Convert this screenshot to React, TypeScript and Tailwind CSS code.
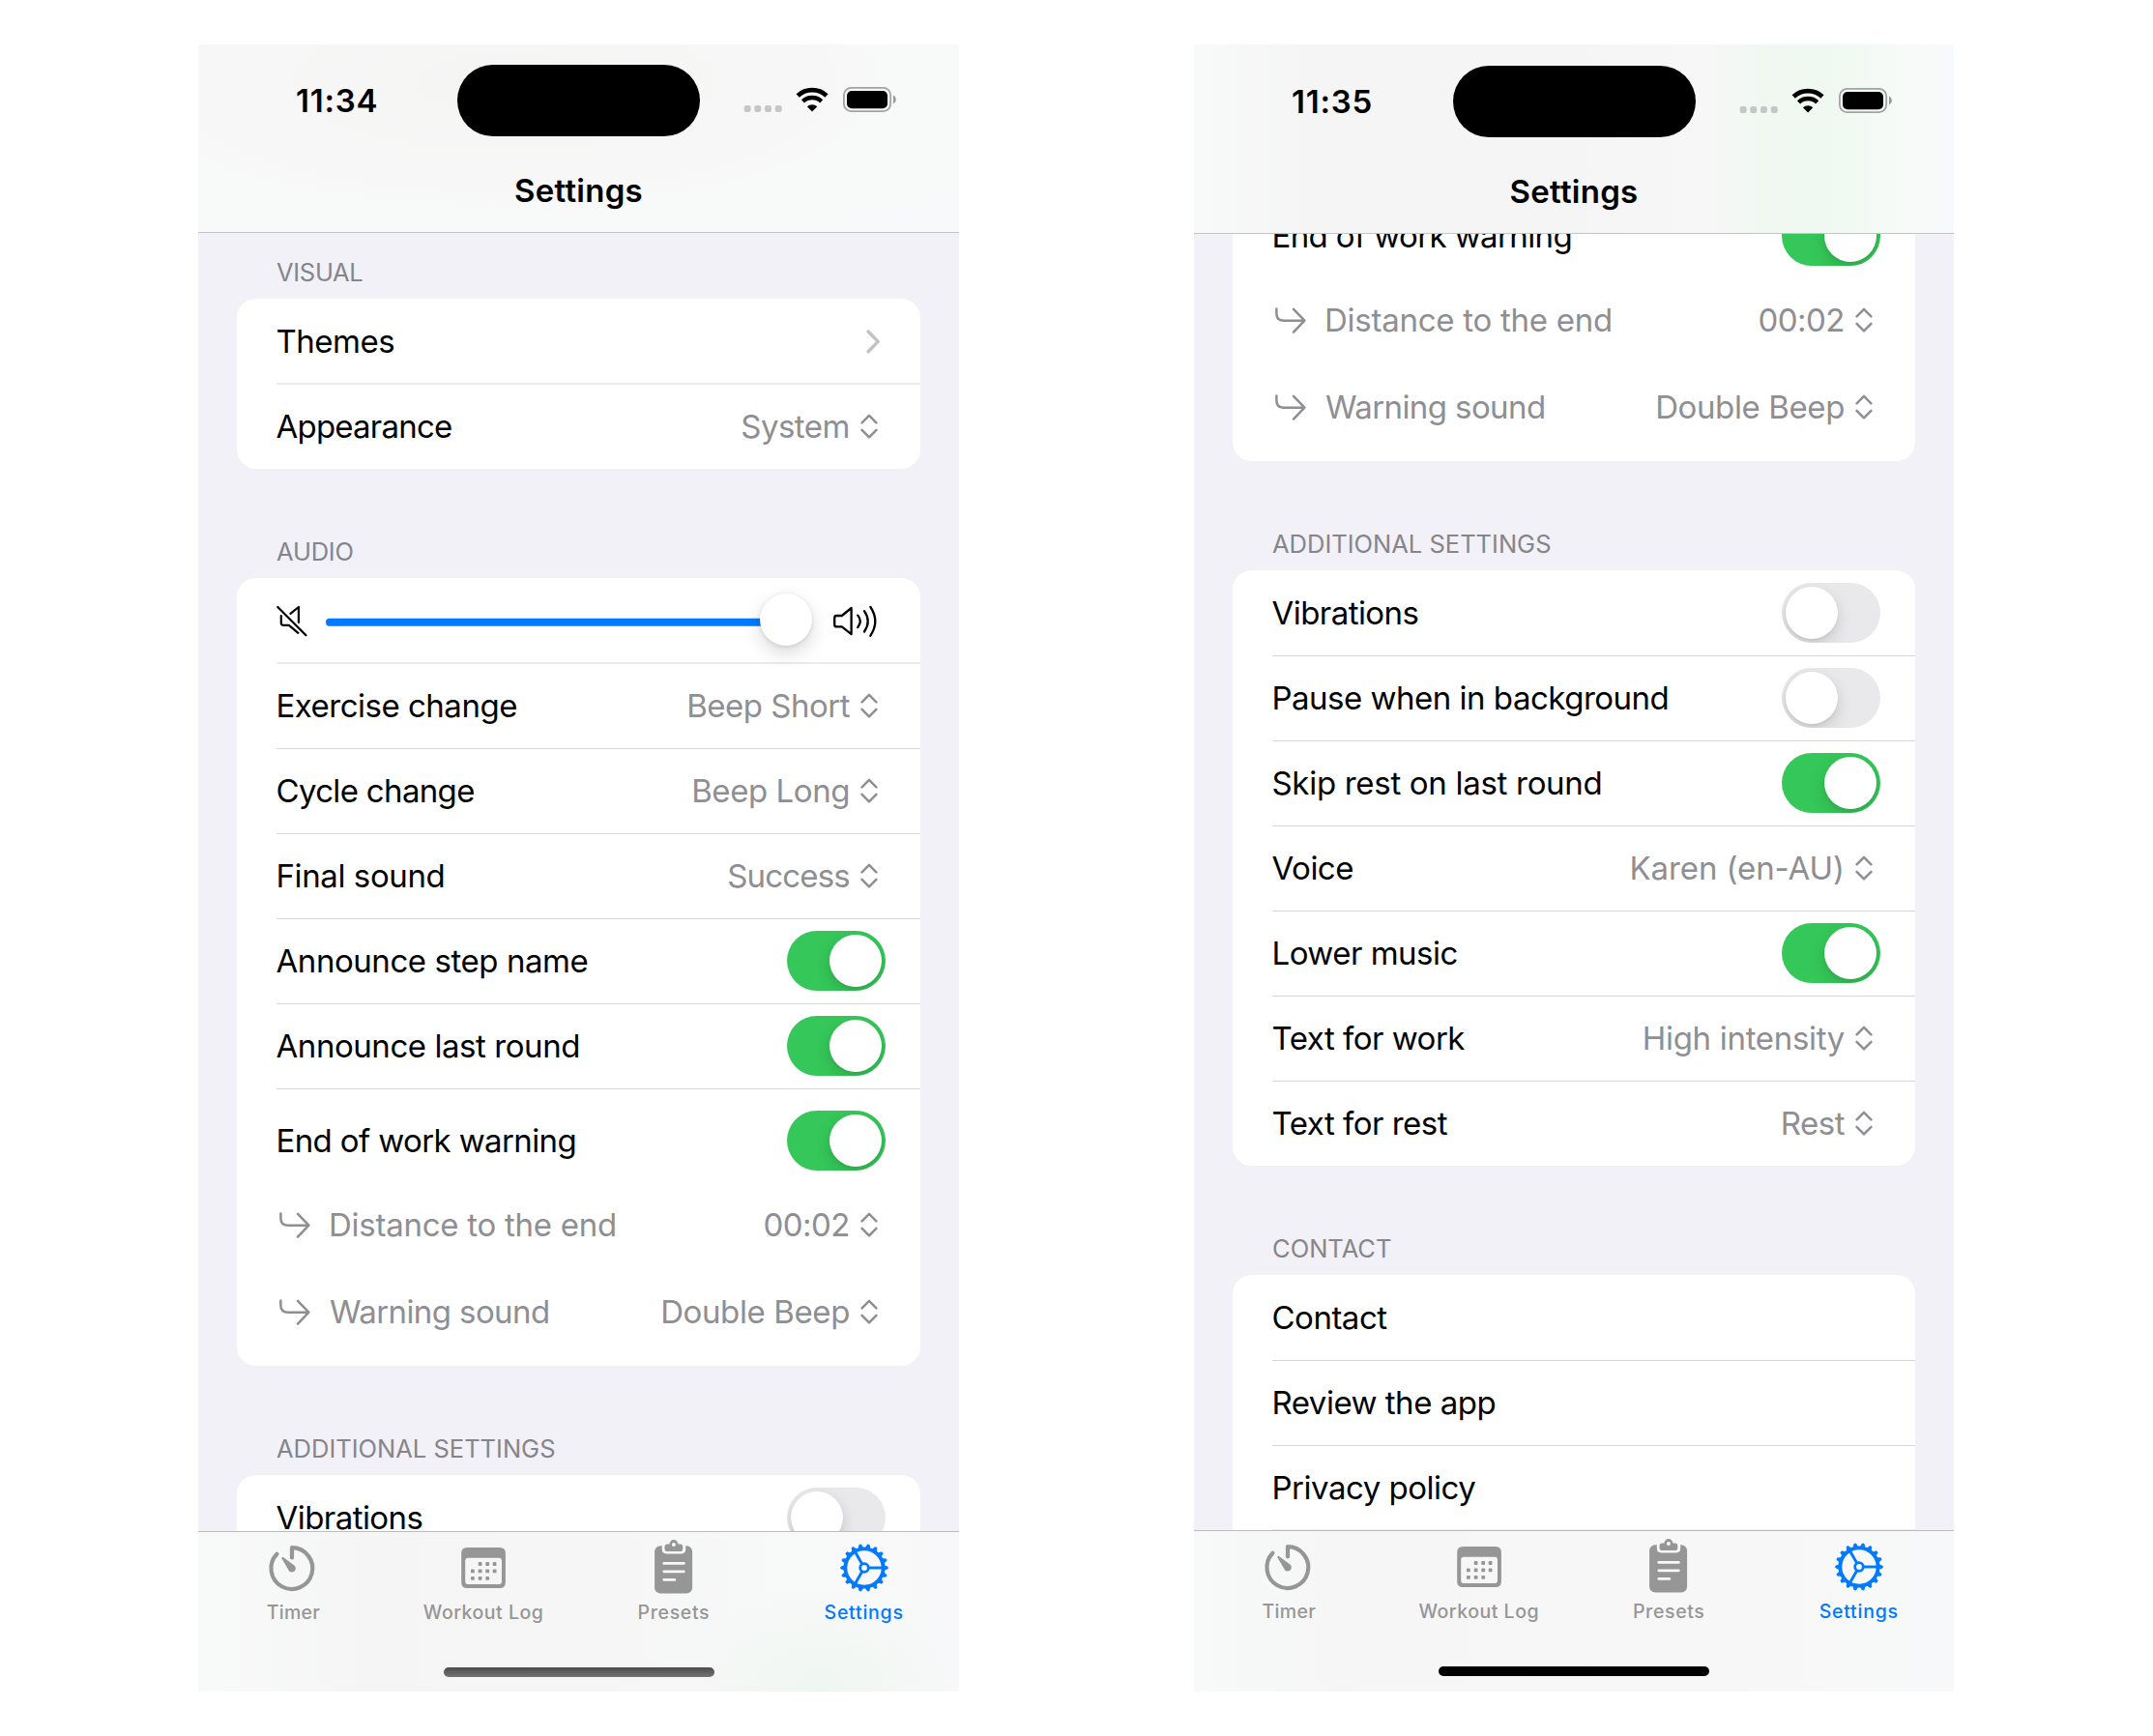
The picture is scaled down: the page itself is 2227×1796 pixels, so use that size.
import React from 'react';

type Accessory =
  | { kind: 'none' }
  | { kind: 'chevron' }
  | { kind: 'select'; value: string; tracking?: string }
  | { kind: 'switch'; on: boolean };

type RowData = {
  label: string;
  tracking?: string;
  accessory: Accessory;
  line?: 'none' | 'crisp' | 'soft';
};

const none: Accessory = { kind: 'none' };
const sw = (on: boolean): Accessory => ({ kind: 'switch', on });
const select = (value: string, tracking?: string): Accessory => ({ kind: 'select', value, tracking });

/* ---------- icons ---------- */

function StatusIcons() {
  return (
    <svg className="h-[30px] w-[160px] shrink-0" viewBox="0 0 160 30" fill="none">
      {[1.7, 12.3, 23, 33.8].map((x) => (
        <rect key={x} x={x} y="20" width="6.9" height="6.9" rx="2.2" fill="#c6c6c8" />
      ))}
      <path d="M57.2 9.9A22 22 0 0 1 87 9.9" stroke="#000" strokeWidth="4.8" />
      <path d="M62.5 15.8A14 14 0 0 1 81.7 15.8" stroke="#000" strokeWidth="4.6" />
      <path d="M72.1 26.6L66.9 21.2A7.6 7.6 0 0 1 77.3 21.2Z" fill="#000" />
      <rect x="104.9" y="1.9" width="48.3" height="24.2" rx="7.6" stroke="#a2a2a4" strokeWidth="1.8" />
      <rect x="108" y="5" width="42" height="18.2" rx="5" fill="#000" />
      <path d="M156 9.6C157.8 10.6 158.8 12.2 158.8 14S157.8 17.4 156 18.4Z" fill="#98989a" />
    </svg>
  );
}

function UpDown() {
  return (
    <svg className="h-[26px] w-[18px] shrink-0" viewBox="0 0 18 26" fill="none" stroke="#8e8e93" strokeWidth="2.5" strokeLinecap="round" strokeLinejoin="round">
      <path d="M1.6 9.3L9 1.9L16.4 9.3M1.6 16.9L9 24.3L16.4 16.9" />
    </svg>
  );
}

function Chevron() {
  return (
    <svg className="h-[26px] w-[16px] shrink-0" viewBox="0 0 16 26" fill="none" stroke="#c2c2c4" strokeWidth="3.4" strokeLinecap="round" strokeLinejoin="round">
      <path d="M3.1 3L13.2 13.4L3.1 23.8" />
    </svg>
  );
}

function NestedArrow() {
  return (
    <svg className="h-[32px] w-[36px] shrink-0" viewBox="0 0 36 32" fill="none" stroke="#8e8e93" strokeWidth="2.5" strokeLinecap="round" strokeLinejoin="round">
      <path d="M4.4 4.4V9.6Q4.4 16.7 11.5 16.7H33.2M22 4.8L33.4 16.7L22 28.6" />
    </svg>
  );
}

function Mute() {
  return (
    <svg className="-ml-px h-[36px] w-[34px] shrink-0" viewBox="0 0 34 36" fill="none" stroke="#000" strokeWidth="2.2" strokeLinecap="round" strokeLinejoin="round">
      <path d="M2.3 4L31.5 33.2M5.8 13V20.6Q5.8 22.8 8 22.8H13.9L23.4 30.8M15.4 10.8L23.9 4V20" />
    </svg>
  );
}

function Loud() {
  return (
    <svg className="h-[36px] w-[50px] shrink-0" viewBox="0 0 50 36" fill="none" stroke="#000" strokeWidth="2.3" strokeLinecap="round" strokeLinejoin="round">
      <path d="M3.2 15.2Q3.2 13 5.4 13H10.8L20.6 5V32.2L10.8 24.4H5.4Q3.2 24.4 3.2 22.2Z" />
      <path d="M27.3 12.6Q32.3 18.8 27.3 25M34 8.2Q41.4 18.8 34 29.5M40.4 4Q50.2 18.8 40.4 33.7" />
    </svg>
  );
}

function TimerIcon() {
  return (
    <svg className="h-[60px] w-[64px]" viewBox="0 0 64 60" fill="none">
      <path d="M31 19.4V9.2A21.4 21.4 0 1 1 15.4 15.8" stroke="#969696" strokeWidth="4.2" strokeLinecap="round" strokeLinejoin="round" />
      <path d="M20.4 20.3Q20 18.4 21.9 18.9L33.4 27.6A3.9 3.9 0 1 1 28 33.2Z" fill="#969696" />
    </svg>
  );
}

function CalendarIcon() {
  const dots = [
    [28.6, 26], [36.2, 26], [43.6, 26],
    [20.9, 33.4], [28.6, 33.4], [36.2, 33.4], [43.6, 33.4],
    [20.9, 40.8], [28.6, 40.8], [36.2, 40.8],
  ];
  return (
    <svg className="h-[60px] w-[64px]" viewBox="0 0 64 60" fill="#969696">
      <path
        fillRule="evenodd"
        d="M15.2 9H48.9Q54.9 9 54.9 15V45Q54.9 51 48.9 51H15.2Q9.2 51 9.2 45V15Q9.2 9 15.2 9ZM16.2 19.8Q13.2 19.8 13.2 22.8V44Q13.2 47.1 16.2 47.1H48Q51 47.1 51 44V22.8Q51 19.8 48 19.8Z"
      />
      {dots.map(([x, y]) => (
        <rect key={`${x}-${y}`} x={x - 1.9} y={y - 1.9} width="3.8" height="3.8" rx="0.9" />
      ))}
    </svg>
  );
}

function ClipboardIcon() {
  return (
    <svg className="h-[60px] w-[64px]" viewBox="0 0 64 60" fill="none">
      <rect x="12.1" y="7.2" width="39" height="49.2" rx="6" fill="#969696" />
      <path d="M19.8 6H44.2V11Q44.2 15.4 39.8 15.4H24.2Q19.8 15.4 19.8 11Z" fill="#f7f8f8" />
      <path d="M27.4 5.6A4.5 4.5 0 0 1 36.4 5.6H38.6Q41.3 5.6 41.3 8.3V10.2Q41.3 13 38.5 13H25.3Q22.5 13 22.5 10.2V8.3Q22.5 5.6 25.2 5.6Z" fill="#969696" />
      <circle cx="31.9" cy="6" r="2" fill="#f7f8f8" />
      <path d="M21.8 25.4H42.4M21.8 33.8H42.4M21.8 42.4H32.8" stroke="#f7f8f8" strokeWidth="2.8" strokeLinecap="round" />
    </svg>
  );
}

function GearIcon() {
  return (
    <svg className="h-[60px] w-[64px]" viewBox="0 0 64 60" fill="none">
      <g transform="translate(32 30)" stroke="#007aff">
        <circle r="19.6" strokeWidth="3.8" />
        <circle r="4.3" strokeWidth="2.8" />
        {[0, 120, 240].map((a) => (
          <path key={a} d="M5 0H19" strokeWidth="2.9" transform={`rotate(${a})`} />
        ))}
        {Array.from({ length: 18 }, (_, i) => (
          <path key={i} d="M20.5 -2.3L24.2 -0.9V0.9L20.5 2.3Z" fill="#007aff" strokeWidth="0.9" strokeLinejoin="round" transform={`rotate(${i * 20})`} />
        ))}
      </g>
    </svg>
  );
}

/* ---------- controls ---------- */

function Switch({ on }: { on: boolean }) {
  return (
    <div className={`flex h-[62px] w-[102px] shrink-0 items-center overflow-hidden rounded-full px-1 ${on ? 'justify-end bg-[#35c759]' : 'bg-[#e9e9eb]'}`}>
      <div className="size-[54px] rounded-full bg-white shadow-[0_6px_16px_rgba(0,0,0,0.15),0_2px_3px_rgba(0,0,0,0.05)]" />
    </div>
  );
}

function SelectValue({ value, tracking }: { value: string; tracking?: string }) {
  return (
    <div className={`flex items-center gap-[11px] text-[#8e8e93] ${tracking ?? 'tracking-[-0.5px]'}`}>
      <span>{value}</span>
      <UpDown />
    </div>
  );
}

function AccessoryView({ accessory }: { accessory: Accessory }) {
  switch (accessory.kind) {
    case 'chevron':
      return <div className="pr-[41px]"><Chevron /></div>;
    case 'select':
      return <div className="pr-[44px]"><SelectValue value={accessory.value} tracking={accessory.tracking} /></div>;
    case 'switch':
      return <div className="pr-[36px]"><Switch on={accessory.on} /></div>;
    default:
      return null;
  }
}

const lines = {
  none: '',
  crisp: 'bg-[linear-gradient(#d6d6d8,#d6d6d8)] bg-[length:100%_1px] bg-no-repeat',
  soft: 'bg-[linear-gradient(#ebebec,#ebebec)] bg-[length:100%_2px] bg-no-repeat -mt-px pt-px',
};

const rowHeights = {
  none: 'h-[88px]',
  crisp: 'h-[88px]',
  soft: 'h-[89px]',
};

function Row({ label, tracking, accessory, line = 'crisp' }: RowData) {
  return (
    <div className={`flex items-center justify-between ${rowHeights[line]} ${lines[line]}`}>
      <span className={`-ml-[0.5px] ${tracking ?? 'tracking-[-0.5px]'}`}>{label}</span>
      <AccessoryView accessory={accessory} />
    </div>
  );
}

function WarningBlock({ ruled }: { ruled: boolean }) {
  return (
    <div className={ruled ? lines.crisp : ''}>
      <div className="flex h-[108px] items-center justify-between">
        <span className="-ml-[0.5px] tracking-[-0.62px]">End of work warning</span>
        <AccessoryView accessory={sw(true)} />
      </div>
      <div className="flex h-[66px] items-center justify-between text-[#8e8e93]">
        <div className="flex items-center gap-[18px]">
          <NestedArrow />
          <span className="tracking-[-0.26px]">Distance to the end</span>
        </div>
        <AccessoryView accessory={select('00:02')} />
      </div>
      <div className="flex h-[113px] items-center justify-between text-[#8e8e93]">
        <div className="flex items-center gap-[19px]">
          <NestedArrow />
          <span className="tracking-[-0.59px]">Warning sound</span>
        </div>
        <AccessoryView accessory={select('Double Beep', 'tracking-[-0.39px]')} />
      </div>
    </div>
  );
}

function VolumeRow() {
  return (
    <div className="flex h-[88px] items-center pr-[42px]">
      <Mute />
      <div className="ml-[18px] flex flex-1 items-center">
        <div className="h-2 flex-1 translate-y-[1.7px] rounded-l-full bg-[#007aff]" />
        <div className="-ml-2 size-[54px] -translate-y-px rounded-full bg-white pl-2 shadow-[0_8px_20px_rgba(0,0,0,0.15),0_1px_4px_rgba(0,0,0,0.12)]" />
      </div>
      <div className="ml-5"><Loud /></div>
    </div>
  );
}

function Heading({ first, tracking, children }: { first?: boolean; tracking?: string; children: React.ReactNode }) {
  return (
    <h2 className={`flex items-end pb-3 pl-[81px] text-[25.5px] leading-[31px] text-[#85858a] ${first ? 'h-[68px]' : 'h-[113px]'} ${tracking ?? 'tracking-normal'}`}>
      {children}
    </h2>
  );
}

function Card({ children }: { children: React.ReactNode }) {
  return <div className="mx-10 overflow-hidden rounded-[20px] bg-white pl-[41px]">{children}</div>;
}

/* ---------- phone ---------- */

function TabBar({ className, indicator }: { className: string; indicator: string }) {
  const tabs = [
    { label: 'Timer', icon: <TimerIcon />, tone: 'text-[#969696] tracking-[0.3px]' },
    { label: 'Workout Log', icon: <CalendarIcon />, tone: 'text-[#969696] tracking-[0.52px]' },
    { label: 'Presets', icon: <ClipboardIcon />, tone: 'text-[#969696] tracking-[0.64px]' },
    { label: 'Settings', icon: <GearIcon />, tone: 'text-[#007aff] tracking-[0.78px]' },
  ];
  return (
    <nav className={`shrink-0 border-t border-[#bcbcbe] pt-[7px] ${className}`}>
      <div className="flex">
        {tabs.map((t) => (
          <div key={t.label} className="flex flex-1 flex-col items-center gap-[5px]">
            {t.icon}
            <span className={`text-[19.5px] leading-[22px] font-medium ${t.tone}`}>{t.label}</span>
          </div>
        ))}
      </div>
      <div className={`mx-auto mt-[46px] h-[10px] w-[280px] rounded-full ${indicator}`} />
    </nav>
  );
}

type PhoneProps = {
  time: string;
  width: string;
  header: string;
  statusTop: string;
  tabBar: string;
  indicator: string;
  children: React.ReactNode;
};

function Phone({ time, width, header, statusTop, tabBar, indicator, children }: PhoneProps) {
  return (
    <section className={`flex h-[1704px] shrink-0 flex-col overflow-hidden bg-[#f2f1f7] ${width}`}>
      <header className={`shrink-0 border-b border-[#c4c4c6] ${header}`}>
        <div className={`flex h-[74px] items-center ${statusTop}`}>
          <div className="w-[268px] pl-[101px] font-semibold tracking-[0.79px]">{time}</div>
          <div className="h-[74px] w-[251px] rounded-full bg-black" />
          <div className="ml-[44px]"><StatusIcons /></div>
        </div>
        <h1 className="flex h-[99px] items-center justify-center pt-3 font-semibold tracking-[0.27px]">Settings</h1>
      </header>
      <main className="min-h-0 flex-1 overflow-hidden">{children}</main>
      <TabBar className={tabBar} indicator={indicator} />
    </section>
  );
}

export default function App() {
  return (
    <div className="flex h-[1796px] w-[2227px] gap-[243px] overflow-hidden bg-white pt-[46px] pl-[205px] font-['Inter','Liberation_Sans',sans-serif] text-[33px] leading-[40px] text-black">
      <Phone
        time="11:34"
        width="w-[787px]"
        header="h-[195px] bg-[radial-gradient(ellipse_at_40%_20%,#f4f5f3_0%,#f7f7f7_45%,#f8faf9_75%,#f8f9fb_100%)]"
        statusTop="mt-[21px]"
        tabBar="h-[166px] bg-[radial-gradient(ellipse_150px_110px_at_82%_100%,#eff6f0_0%,transparent_100%),linear-gradient(90deg,#f8faf9_0%,#f5f5f5_22%,#f6f6f6_55%,#f8f9f9_80%,#f8f8fa_100%)]"
        indicator="bg-[linear-gradient(#4b4b4b,#747474)]"
      >
        <Heading first tracking="tracking-[-0.3px]">VISUAL</Heading>
        <Card>
          <Row label="Themes" line="none" accessory={{ kind: 'chevron' }} />
          <Row label="Appearance" tracking="tracking-[-0.78px]" line="soft" accessory={select('System')} />
        </Card>
        <Heading tracking="tracking-[-0.2px]">AUDIO</Heading>
        <Card>
          <VolumeRow />
          <Row label="Exercise change" line="soft" accessory={select('Beep Short')} />
          <Row label="Cycle change" tracking="tracking-[-0.67px]" accessory={select('Beep Long', 'tracking-[-0.44px]')} />
          <Row label="Final sound" tracking="tracking-[-0.4px]" accessory={select('Success', 'tracking-[-0.8px]')} />
          <Row label="Announce step name" tracking="tracking-[-0.44px]" accessory={sw(true)} />
          <Row label="Announce last round" tracking="tracking-[-0.44px]" accessory={sw(true)} />
          <WarningBlock ruled />
        </Card>
        <Heading>ADDITIONAL SETTINGS</Heading>
        <Card>
          <Row label="Vibrations" tracking="tracking-[-0.55px]" line="none" accessory={sw(false)} />
        </Card>
      </Phone>

      <Phone
        time="11:35"
        width="w-[786px]"
        header="h-[196px] bg-[linear-gradient(90deg,#f8faf9_0%,#f5f5f5_14%,#f5f5f5_50%,#f6f7f6_68%,#f0f8f1_75%,#eff9f1_84%,#f6faf7_92%,#f8f9fb_100%)]"
        statusTop="mt-[22px]"
        tabBar="h-[167px] bg-[linear-gradient(90deg,#f7faf9_0%,#f6f6f6_18%,#f7f7f7_60%,#f7f8f8_90%,#f8f8fa_100%)]"
        indicator="bg-black"
      >
        <div className="-mt-[52px]">
          <Card>
            <WarningBlock ruled={false} />
          </Card>
          <Heading>ADDITIONAL SETTINGS</Heading>
          <Card>
            <Row label="Vibrations" tracking="tracking-[-0.55px]" line="none" accessory={sw(false)} />
            <Row label="Pause when in background" accessory={sw(false)} />
            <Row label="Skip rest on last round" tracking="tracking-[-0.3px]" accessory={sw(true)} />
            <Row label="Voice" accessory={select('Karen (en-AU)', 'tracking-[-0.1px]')} />
            <Row label="Lower music" accessory={sw(true)} />
            <Row label="Text for work" accessory={select('High intensity', 'tracking-[-0.32px]')} />
            <Row label="Text for rest" accessory={select('Rest')} />
          </Card>
          <Heading>CONTACT</Heading>
          <Card>
            <Row label="Contact" line="none" accessory={none} />
            <Row label="Review the app" accessory={none} />
            <Row label="Privacy policy" accessory={none} />
            <Row label="Terms of use" line="soft" accessory={none} />
          </Card>
        </div>
      </Phone>
    </div>
  );
}
